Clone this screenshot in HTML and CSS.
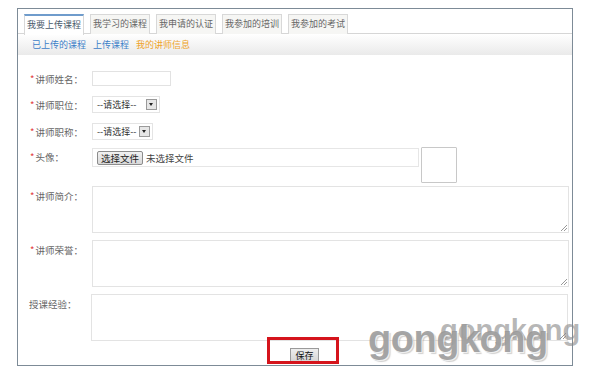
FILE: index.html
```html
<!DOCTYPE html>
<html lang="zh-CN">

<head>
  <meta charset="UTF-8">
  <title>我的讲师信息</title>
  <link rel="stylesheet" href="styles.css">
</head>

<body>
  <div class="frame">
    <div class="tabs">
      <span class="tab active">我要上传课程</span>
      <span class="tab">我学习的课程</span>
      <span class="tab">我申请的认证</span>
      <span class="tab">我参加的培训</span>
      <span class="tab">我参加的考试</span>
    </div>
    <div class="subnav">
      <a href="#">已上传的课程</a>
      <a href="#">上传课程</a>
      <a href="#" class="current">我的讲师信息</a>
    </div>

    <form class="form">
      <div class="row r1">
        <label class="lbl"><i>*</i>讲师姓名：</label>
        <span class="text-input"></span>
      </div>
      <div class="row r2">
        <label class="lbl"><i>*</i>讲师职位：</label>
        <span class="select wide">--请选择--<b class="arrow"></b></span>
      </div>
      <div class="row r3">
        <label class="lbl"><i>*</i>讲师职称：</label>
        <span class="select">--请选择--<b class="arrow"></b></span>
      </div>
      <div class="row r4">
        <label class="lbl"><i>*</i>头像：</label>
        <span class="file"><span class="file-btn">选择文件</span>未选择文件</span>
        <span class="preview"></span>
      </div>
      <div class="row area">
        <label class="lbl"><i>*</i>讲师简介：</label>
        <span class="textarea"></span>
      </div>
      <div class="row area">
        <label class="lbl"><i>*</i>讲师荣誉：</label>
        <span class="textarea"></span>
      </div>
      <div class="row area">
        <label class="lbl plain">授课经验：</label>
        <span class="textarea"></span>
      </div>
      <div class="actions">
        <span class="save">保存</span>
        <span class="mark"></span>
      </div>
    </form>
  </div>

  <div class="watermark">
    <span class="wm-back">gongkong</span>
    <span class="wm-front">gongkong</span>
  </div>
</body>

</html>
```

FILE: styles.css
```css
body {
  margin: 0;
  background: #fff;
  font-family: "Noto Sans CJK SC", "Liberation Sans", sans-serif;
  font-size: 10px;
  color: #555;
}

.frame {
  position: relative;
  box-sizing: border-box;
  width: 556px;
  height: 358px;
  margin: 8px 0 0 17px;
  border: 1px solid #7d8b97;
}

/* tabs */
.tabs {
  display: flex;
  gap: 6px;
  height: 25px;
  padding: 5px 0 0 6px;
  box-sizing: border-box;
  border-bottom: 1px solid #d6d6d6;
}

.tab {
  box-sizing: border-box;
  width: 60px;
  height: 20px;
  line-height: 18px;
  text-align: center;
  font-size: 9px;
  color: #666;
  background: #f6f6f4;
  border: 1px solid #d8d8d8;
  border-bottom: none;
}

.tab.active {
  height: 21px;
  border-top: 2px solid #6f9ccc;
  background: #fff;
  color: #4a5a6a;
}

.subnav {
  height: 21px;
  padding-left: 14px;
  display: flex;
  align-items: center;
  gap: 7px;
  background: linear-gradient(#fff, #eaeaea);
}

.subnav a {
  font-size: 9px;
  color: #3d80c8;
  text-decoration: none;
}

.subnav a.current {
  color: #eea22a;
}

/* form */
.form {
  padding: 16px 0 0 12px;
}

.row {
  display: flex;
  align-items: center;
}

.lbl {
  width: 62px;
  flex: none;
  font-size: 9.5px;
  color: #666;
  line-height: 14px;
}

.lbl i {
  font-style: normal;
  color: #e23a3a;
  margin-right: 1px;
}

.lbl.plain {
  margin-left: -1px;
}

.r1 { height: 15px; }
.r2 { height: 17px; margin-top: 10px; }
.r3 { height: 17px; margin-top: 10px; }
.r4 { align-items: flex-start; margin-top: 7px; }
.r4 .lbl { margin-top: 3px; }

.text-input {
  box-sizing: border-box;
  width: 79px;
  height: 15px;
  border: 1px solid #e2e2e2;
}

.select {
  box-sizing: border-box;
  display: flex;
  align-items: center;
  justify-content: space-between;
  width: 61px;
  height: 17px;
  padding: 0 2px 0 4px;
  border: 1px solid #e4e4e4;
  font-size: 9px;
  color: #333;
}

.select.wide {
  width: 68px;
}

.arrow {
  box-sizing: border-box;
  width: 11px;
  height: 11px;
  border: 1px solid #9a9a9a;
  background: #e6e6e6;
  position: relative;
}

.arrow::after {
  content: "";
  position: absolute;
  left: 2px;
  top: 3px;
  border-left: 2.5px solid transparent;
  border-right: 2.5px solid transparent;
  border-top: 3px solid #222;
}

.file {
  box-sizing: border-box;
  display: flex;
  align-items: center;
  gap: 3px;
  width: 327px;
  height: 19px;
  margin-top: 1px;
  padding-left: 4px;
  border: 1px solid #e6e6e6;
  font-size: 9.5px;
  color: #444;
}

.file-btn {
  box-sizing: border-box;
  height: 14px;
  line-height: 12px;
  padding: 0 3px;
  border: 1px solid #8c8c8c;
  border-radius: 2px;
  background: linear-gradient(#f2f2f2, #d8d8d8);
  color: #222;
}

.preview {
  box-sizing: border-box;
  width: 36px;
  height: 36px;
  margin-left: 2px;
  border: 1px solid #c8c8c8;
  border-radius: 1px;
}

.area {
  align-items: flex-start;
  margin-top: 7px;
}

.r4 + .area {
  margin-top: 3px;
}

.area .lbl {
  margin-top: 3px;
}

.area:last-of-type {
  margin-top: 6px;
}

.textarea {
  position: relative;
  box-sizing: border-box;
  width: 477px;
  height: 47px;
  border: 1px solid #e3e3e3;
}

.textarea::after {
  content: "";
  position: absolute;
  right: 1px;
  bottom: 1px;
  width: 6px;
  height: 6px;
  background: linear-gradient(135deg, transparent 45%, #999 45%, #999 55%, transparent 55%, transparent 70%, #999 70%, #999 80%, transparent 80%);
}

.actions {
  position: relative;
  height: 18px;
  padding: 6px 0 0 260px;
}

.save {
  display: inline-block;
  box-sizing: border-box;
  width: 29px;
  height: 16px;
  line-height: 14px;
  text-align: center;
  font-size: 9px;
  color: #111;
  border: 1px solid #9a9a9a;
  background: linear-gradient(#eeeeee, #d2d2d2);
}

.mark {
  position: absolute;
  left: 237px;
  top: -4px;
  width: 66px;
  height: 21px;
  border: 3px solid #d5141c;
}

/* watermark overlay */
.watermark {
  position: absolute;
  left: 368px;
  top: 314px;
  width: 220px;
  height: 60px;
  font-family: "Liberation Sans", Arial, sans-serif;
  font-weight: bold;
  pointer-events: none;
}

.wm-back {
  position: absolute;
  left: 72px;
  top: 0;
  font-size: 29px;
  color: rgba(135, 135, 135, 0.6);
}

.wm-front {
  position: absolute;
  left: 0;
  top: 4px;
  font-size: 38px;
  letter-spacing: -0.5px;
  color: rgba(150, 150, 150, 0.85);
  text-shadow: 1px 1px 0 rgba(255, 255, 255, 0.7), 2px 2px 1px rgba(120, 120, 120, 0.35);
}
```
